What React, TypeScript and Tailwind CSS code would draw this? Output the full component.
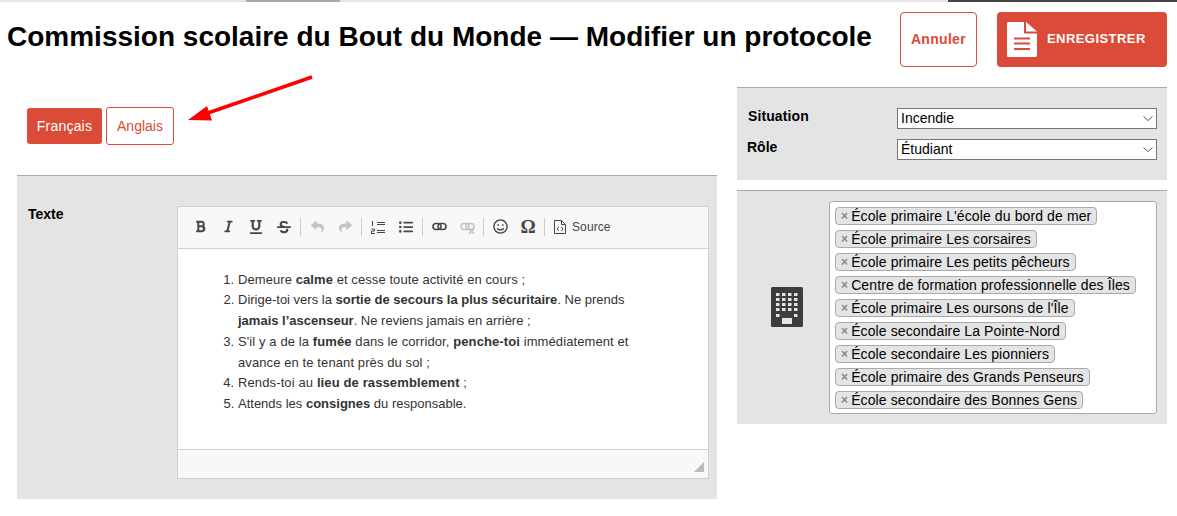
import { FaBold, FaItalic, FaUnderline, FaStrikethrough, FaReply, FaShare, FaListUl, FaRegSmile } from 'react-icons/fa';
import type { ReactNode } from 'react';

const schools = [
  "École primaire L'école du bord de mer",
  "École primaire Les corsaires",
  "École primaire Les petits pêcheurs",
  "Centre de formation professionnelle des Îles",
  "École primaire Les oursons de l'Île",
  "École secondaire La Pointe-Nord",
  "École secondaire Les pionniers",
  "École primaire des Grands Penseurs",
  "École secondaire des Bonnes Gens",
];

const ToolbarSep = () => <span className="mx-[2px] h-[18px] w-px bg-[#ccc]" />;

const Tool = ({ children, muted }: { children: ReactNode; muted?: boolean }) => (
  <span className={muted ? "flex w-[28px] justify-center text-[14px] text-[#c4c4c4]" : "flex w-[28px] justify-center text-[14px] text-[#474747]"}>
    {children}
  </span>
);

const NumberedIcon = () => (
  <svg width="14" height="14" viewBox="0 0 14 14" fill="none" stroke="currentColor">
    <path d="M6 2.5H14M6 4.5H14M6 10.5H14M6 12.5H14" strokeWidth="1" />
    <path d="M1.5 1V6M0 13.5H4M0.5 9H3.5V11H0.5V13.5" strokeWidth="1" />
  </svg>
);

const LinkIcon = ({ broken }: { broken?: boolean }) => (
  <svg width="15" height="14" viewBox="0 0 15 14" fill="none" stroke="currentColor" strokeWidth="1.6">
    <rect x="1" y="3.5" width="8" height="6" rx="3" />
    <rect x="6" y="3.5" width="8" height="6" rx="3" />
    {broken && <path d="M9 9L14 14M14 9L9 14" strokeWidth="1.5" />}
  </svg>
);

const Select = ({ value }: { value: string }) => (
  <div className="flex h-[21px] w-[260px] items-center justify-between border border-[#767676] bg-white pl-[3px] pr-[3px] text-[14px] text-black">
    <span>{value}</span>
    <svg width="10" height="5" viewBox="0 0 10 5" fill="none" stroke="#555" strokeWidth="1">
      <path d="M0.5 0.5 L5 4.5 L9.5 0.5" />
    </svg>
  </div>
);

export default function App() {
  return (
    <div className="relative h-[516px] w-[1177px] overflow-hidden bg-white font-['Liberation_Sans',Arial,sans-serif]">
      {/* bandeau du haut */}
      <div className="flex h-[2px]">
        <div className="w-[246px] bg-[#e5e5e5]" />
        <div className="w-[94px] bg-[#aaa]" />
        <div className="w-[608px] bg-[#e5e5e5]" />
        <div className="flex-1 bg-[#444]" />
      </div>

      {/* en-tête */}
      <div className="flex h-[65px] items-start pt-[10px]">
        <h1 className="ml-[7px] mt-[9px] whitespace-nowrap text-[28px] font-bold leading-[32px] text-black">
          Commission scolaire du Bout du Monde — Modifier un protocole
        </h1>
        <button className="ml-[28px] h-[55px] w-[77px] rounded-[4px] border border-[#dc4a38] bg-white text-[14px] font-bold tracking-[0.3px] text-[#dc4a38]">
          Annuler
        </button>
        <button className="ml-[20px] flex h-[55px] w-[170px] items-center rounded-[4px] bg-[#dc4a38] pl-[10px] text-[13px] font-bold tracking-[0.45px] text-white">
          <svg width="30" height="35" viewBox="0 0 30 35">
            <path d="M0 1.5A1.5 1.5 0 0 1 1.5 0H17V11.5H30V33.5A1.5 1.5 0 0 1 28.5 35H1.5A1.5 1.5 0 0 1 0 33.5Z" fill="#fff" />
            <path d="M19 0L30 9.5H19Z" fill="#fff" />
            <path d="M7 16.5H23M7 21.5H23M7 27H23" stroke="#dc4a38" strokeWidth="2" />
          </svg>
          <span className="ml-[10px] -translate-y-[1px]">ENREGISTRER</span>
        </button>
      </div>

      <div className="mt-[20px] flex items-start pl-[17px]">
        {/* colonne gauche */}
        <div className="w-[700px]">
          <div className="flex h-[88px] items-start gap-[4px] pl-[10px] pt-[20px]">
            <button className="mt-[1px] h-[36px] w-[75px] rounded-[3px] bg-[#dc4a38] text-[14px] tracking-[0.2px] text-white">Français</button>
            <button className="h-[38px] w-[68px] rounded-[3px] border border-[#dc4a38] bg-white text-[14px] text-[#dc4a38]">Anglais</button>
          </div>
          <div className="flex h-[324px] border-t border-[#aaa] bg-[#e4e4e4] pl-[11px] pt-[30px]">
            <div className="w-[149px] text-[14px] font-bold leading-[16px] text-black">Texte</div>
            <div className="h-[273px] w-[532px] border border-[#d1d1d1] bg-white">
              <div className="flex h-[42px] items-center border-b border-[#d1d1d1] bg-[#f8f8f8] pb-[2px] pl-[8px]">
                <Tool><FaBold className="h-[13px] w-[13px]" /></Tool>
                <Tool><FaItalic className="h-[13px] w-[13px]" /></Tool>
                <Tool><FaUnderline className="h-[14px] w-[14px]" /></Tool>
                <Tool><FaStrikethrough className="h-[14px] w-[14px]" /></Tool>
                <ToolbarSep />
                <Tool muted><FaReply className="h-[13px] w-[13px]" /></Tool>
                <Tool muted><FaShare className="h-[13px] w-[13px]" /></Tool>
                <ToolbarSep />
                <Tool><NumberedIcon /></Tool>
                <Tool><FaListUl className="h-[14px] w-[14px]" /></Tool>
                <ToolbarSep />
                <Tool><LinkIcon /></Tool>
                <Tool muted><LinkIcon broken /></Tool>
                <ToolbarSep />
                <Tool><FaRegSmile className="h-[15px] w-[15px]" /></Tool>
                <Tool><span className="font-['Liberation_Serif',serif] text-[19px] font-bold leading-none">Ω</span></Tool>
                <ToolbarSep />
                <svg className="ml-[7px] text-[#474747]" width="12" height="14" viewBox="0 0 12 14" fill="none" stroke="currentColor">
                  <path d="M0.5 0.5H7.5L11.5 4.5V13.5H0.5Z" />
                  <path d="M7.5 0.5V4.5H11.5" />
                  <path d="M4.8 7L3 9L4.8 11M7.2 7L9 9L7.2 11" />
                </svg>
                <span className="ml-[6px] text-[12px] tracking-[0.1px] text-[#444]">Source</span>
              </div>
              <div className="h-[200px] pl-[60px] pr-[50px] pt-[20.5px] text-[13px] leading-[20.8px] text-[#333]">
                <ol className="list-decimal">
                  <li className="tracking-[0.08px]">Demeure <b>calme</b> et cesse toute activité en cours ;</li>
                  <li>Dirige-toi vers la <b>sortie de secours la plus sécuritaire</b>. Ne prends <b>jamais l’ascenseur</b>. Ne reviens jamais en arrière ;</li>
                  <li className="tracking-[0.1px]">S'il y a de la <b>fumée</b> dans le corridor, <b>penche-toi</b> immédiatement et avance en te tenant près du sol ;</li>
                  <li className="tracking-[0.12px]">Rends-toi au <b>lieu de rassemblement</b> ;</li>
                  <li>Attends les <b>consignes</b> du responsable.</li>
                </ol>
              </div>
              <div className="flex h-[29px] items-end justify-end border-t border-[#d1d1d1] bg-[#f8f8f8] pb-[6px] pr-[4px]">
                <svg width="10" height="10" viewBox="0 0 10 10"><path d="M10 0 V10 H0 Z" fill="#bbb" /></svg>
              </div>
            </div>
          </div>
        </div>

        {/* colonne droite */}
        <div className="ml-[20px] w-[430px]">
          <div className="h-[93px] border-t border-[#aaa] bg-[#e4e4e4] pl-[10px] pr-[10px] pt-[20px]">
            <div className="flex items-start justify-between">
              <span className="ml-[1px] text-[14px] font-bold leading-[17px] tracking-[0.1px] text-black">Situation</span>
              <Select value="Incendie" />
            </div>
            <div className="mt-[10px] flex items-start justify-between">
              <span className="text-[14px] font-bold leading-[17px] text-black">Rôle</span>
              <Select value="Étudiant" />
            </div>
          </div>
          <div className="mt-[10px] flex h-[234px] border-t border-[#aaa] bg-[#e4e4e4] pt-[10px]">
            <div className="flex w-[92px] shrink-0 items-center pb-[12px] pl-[34px]">
              <svg width="32" height="40" viewBox="0 0 32 40">
                <rect width="32" height="40" rx="1.5" fill="#3d3d3d" />
                {[6, 11, 16, 21].map((y) =>
                  [5, 11, 17, 23].map((x) => <rect key={`${x}-${y}`} x={x} y={y} width="3.5" height="3" fill="#e4e4e4" />)
                )}
                <rect x="5" y="27" width="3.5" height="3" fill="#e4e4e4" />
                <rect x="23" y="27" width="3.5" height="3" fill="#e4e4e4" />
                <rect x="11" y="31" width="10" height="6" fill="#e4e4e4" />
              </svg>
            </div>
            <div className="h-[213px] w-[328px] rounded-[3px] border border-[#aaa] bg-white pl-[5px] pt-[5px]">
              {schools.map((s) => (
                <div key={s} className="mb-[5px] flex h-[18px] w-fit items-center whitespace-nowrap rounded-[4px] border border-[#aaa] bg-[#e4e4e4] px-[5px] text-[14px] leading-[16px] tracking-[0.11px] text-black">
                  <span className="mr-[3px] text-[12px] font-bold leading-none text-[#888]">×</span>
                  {s}
                </div>
              ))}
            </div>
          </div>
        </div>
      </div>

      {/* flèche d'annotation */}
      <svg className="absolute left-0 top-0" width="1177" height="516" fill="none">
        <path d="M312 77 L205 114" stroke="#fe0000" strokeWidth="3.5" />
        <path d="M188 120 L207 106 L212 120.5 Z" fill="#fe0000" />
      </svg>
    </div>
  );
}
